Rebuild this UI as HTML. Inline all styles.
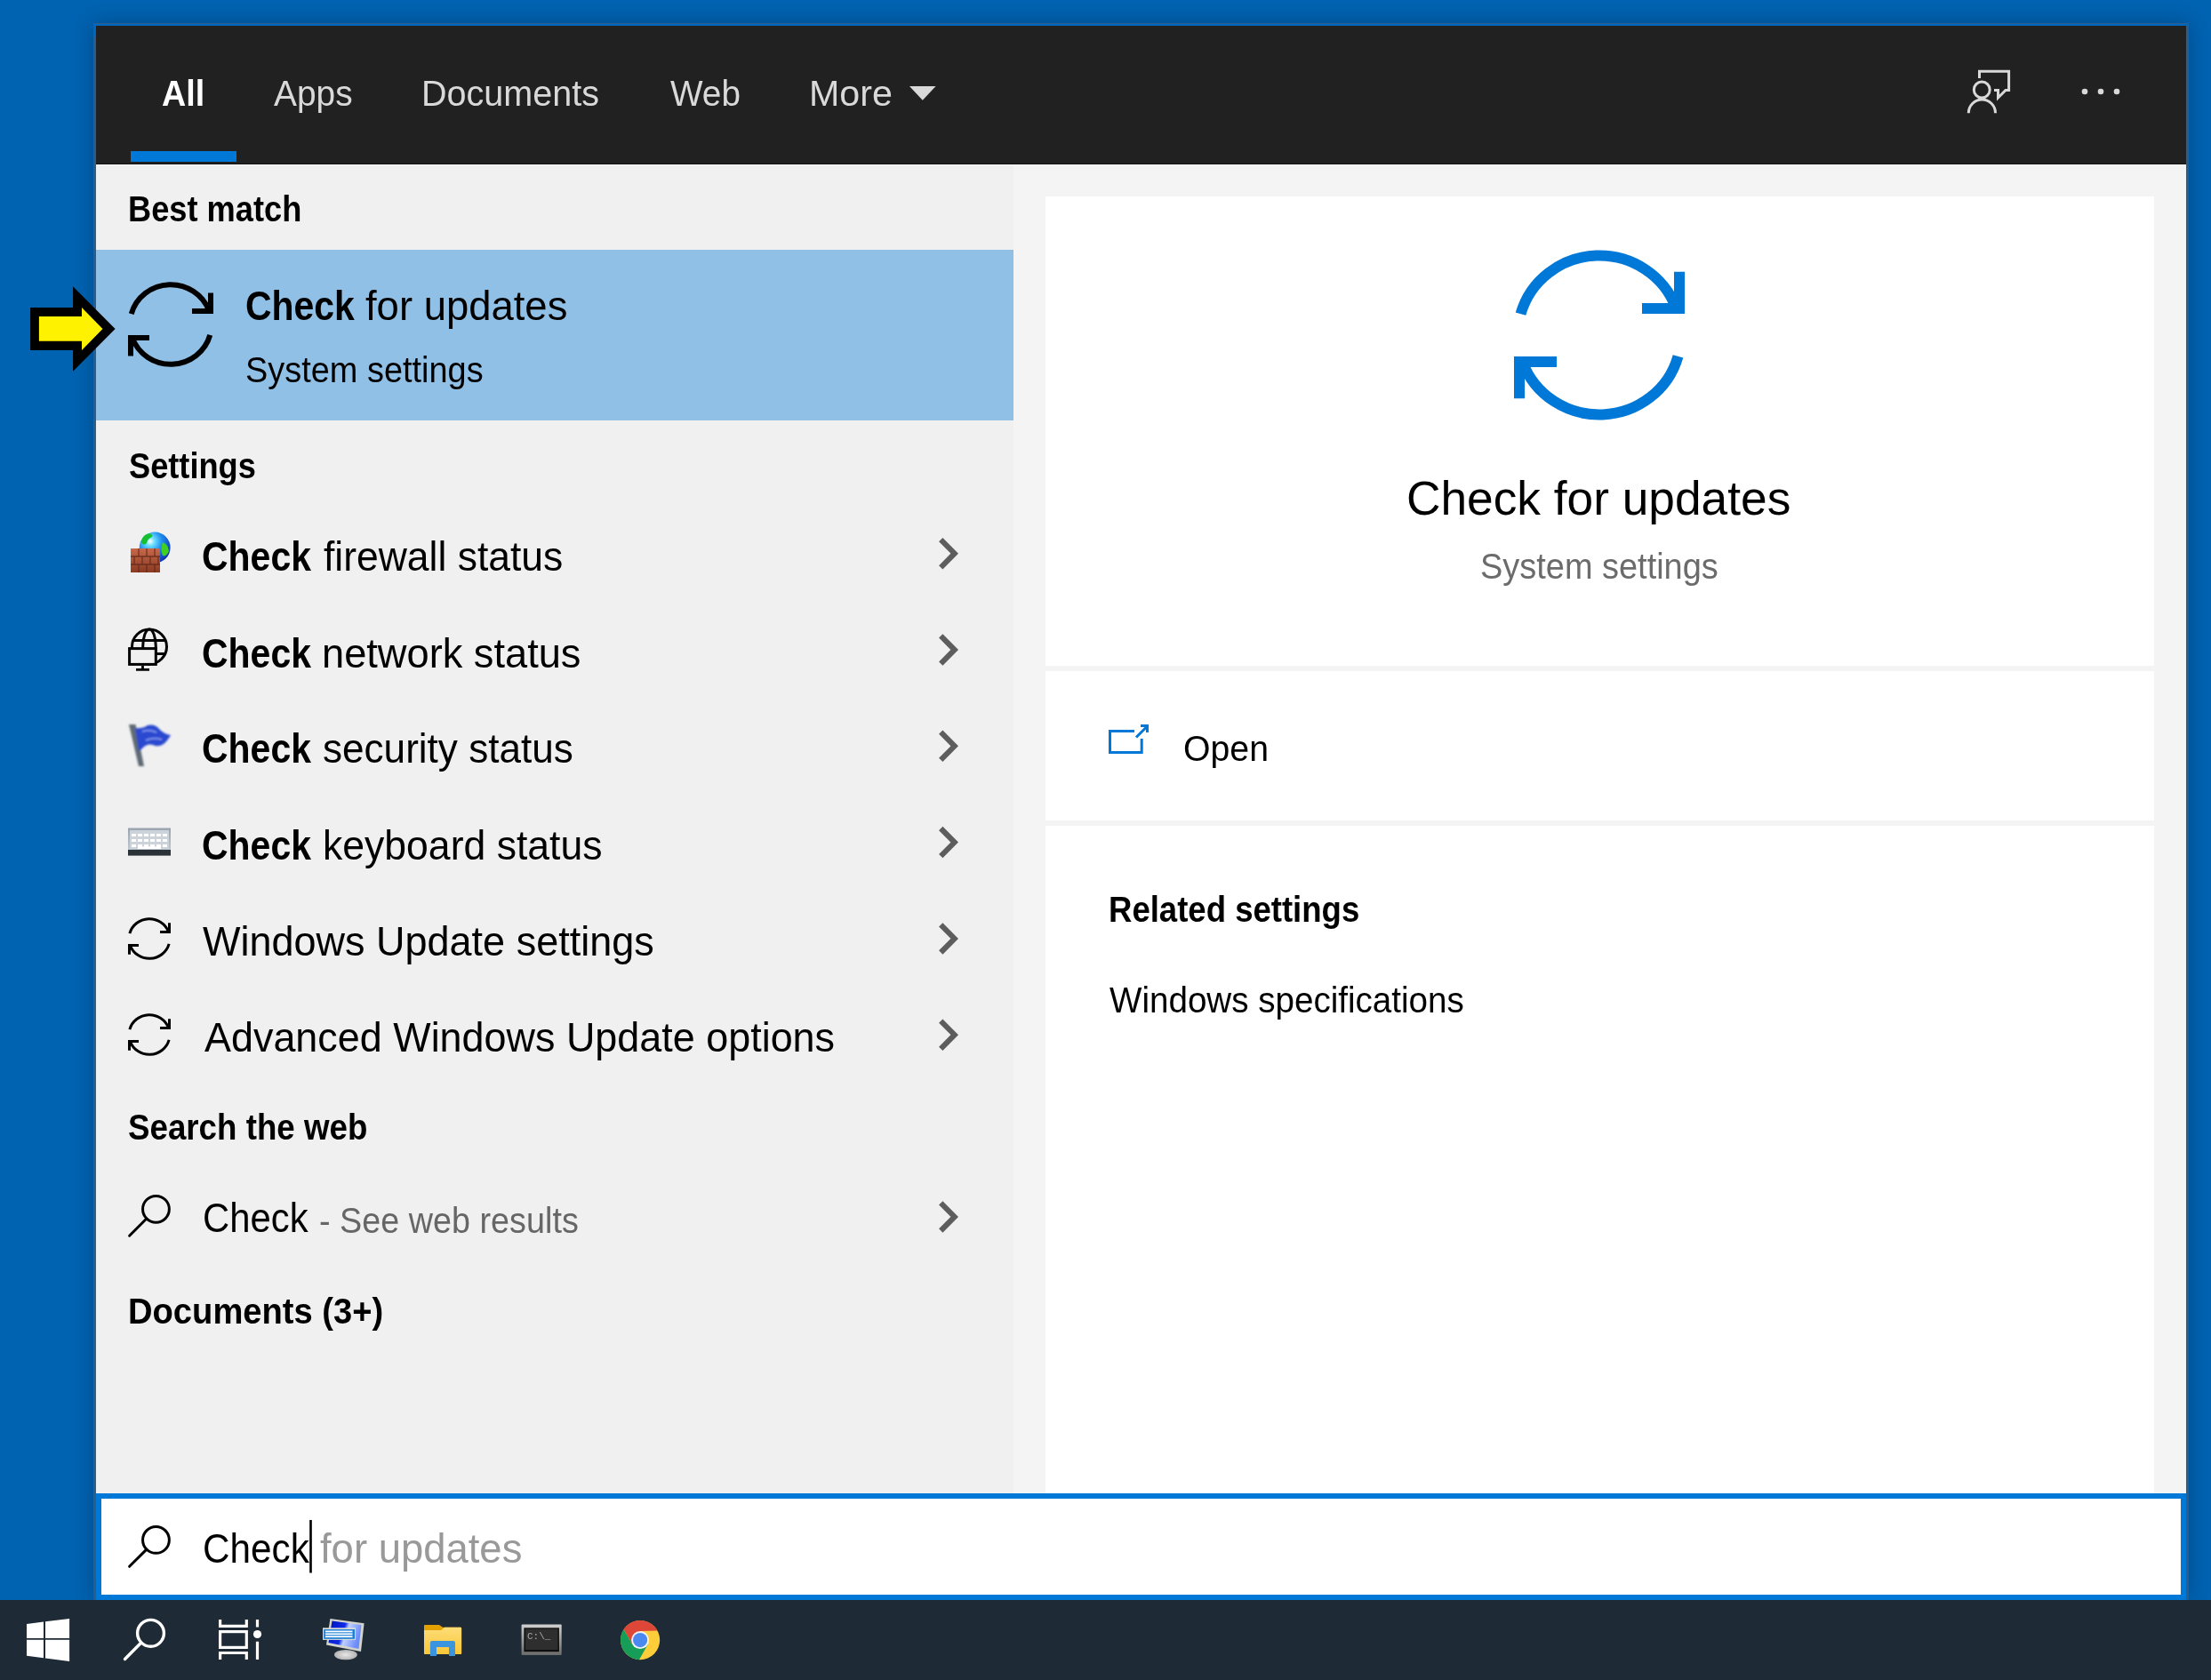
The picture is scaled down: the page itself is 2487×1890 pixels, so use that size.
<!DOCTYPE html>
<html><head><meta charset="utf-8">
<style>
html,body{margin:0;padding:0;}
body{width:2487px;height:1890px;position:relative;overflow:hidden;background:#0063b1;font-family:"Liberation Sans",sans-serif;}
.a{position:absolute;}
.t{position:absolute;white-space:pre;transform-origin:0 0;}
svg.a{overflow:visible}
</style></head><body>
<div class="a" style="left:105px;top:26px;width:2357px;height:1774px;background:#2b5d8b;box-shadow:0 0 22px rgba(0,15,50,0.3);"></div>
<div class="a" style="left:106px;top:27px;width:2355px;height:2px;background:#0067c0;"></div>
<div class="a" style="left:106px;top:27px;width:2px;height:14px;background:#0067c0;"></div>
<div class="a" style="left:108px;top:29px;width:2351px;height:156px;background:#212121;"></div>
<div class="a" style="left:108px;top:184px;width:2351px;height:1px;background:#121212;"></div>
<div class="a" style="left:108px;top:185px;width:2351px;height:1px;background:#ffffff;"></div>
<div class="a" style="left:108px;top:186px;width:1032px;height:1494px;background:#f0f0f0;"></div>
<div class="a" style="left:1140px;top:186px;width:1319px;height:1494px;background:#f4f4f4;"></div>
<div class="a" style="left:1176px;top:221px;width:1247px;height:528px;background:#fff;"></div>
<div class="a" style="left:1176px;top:755px;width:1247px;height:168px;background:#fff;"></div>
<div class="a" style="left:1176px;top:929px;width:1247px;height:751px;background:#fff;"></div>
<div class="a" style="left:108px;top:281px;width:1032px;height:192px;background:#91c0e7;"></div>
<div class="a" style="left:147px;top:170px;width:119px;height:12px;background:#0078d7;"></div>
<div class="a" style="left:108px;top:1680px;width:2339px;height:108px;border:6px solid #0078d7;background:#fff;"></div>
<div class="a" style="left:0;top:1800px;width:2487px;height:90px;background:#1e2b37;"></div>
<div class="t" style="left:182.06px;top:85.14px;font-size:40.70px;line-height:40.70px;font-weight:700;color:#fff;transform:scaleX(0.9268)">All</div><div class="t" style="left:308.00px;top:85.14px;font-size:40.70px;line-height:40.70px;font-weight:400;color:#d9d9d9;transform:scaleX(0.9565)">Apps</div><div class="t" style="left:474.24px;top:85.14px;font-size:40.70px;line-height:40.70px;font-weight:400;color:#d9d9d9;transform:scaleX(0.9719)">Documents</div><div class="t" style="left:753.61px;top:85.14px;font-size:40.70px;line-height:40.70px;font-weight:400;color:#d9d9d9;transform:scaleX(0.9519)">Web</div><div class="t" style="left:910.10px;top:85.14px;font-size:40.70px;line-height:40.70px;font-weight:400;color:#d9d9d9;transform:scaleX(1.0125)">More</div><div class="t" style="left:144.44px;top:215.24px;font-size:40.70px;line-height:40.70px;font-weight:700;color:#000;transform:scaleX(0.8904)">Best match</div><div class="t" style="left:275.56px;top:321.69px;font-size:45.90px;line-height:45.90px;font-weight:700;color:#000;transform:scaleX(0.8921)">Check</div><div class="t" style="left:411.32px;top:321.69px;font-size:45.90px;line-height:45.90px;font-weight:400;color:#000;transform:scaleX(0.9902)">for updates</div><div class="t" style="left:275.79px;top:395.74px;font-size:40.70px;line-height:40.70px;font-weight:400;color:#000;transform:scaleX(0.9318)">System settings</div><div class="t" style="left:144.51px;top:503.84px;font-size:40.70px;line-height:40.70px;font-weight:700;color:#000;transform:scaleX(0.8902)">Settings</div><div class="t" style="left:227.36px;top:604.04px;font-size:45.90px;line-height:45.90px;font-weight:700;color:#000;transform:scaleX(0.8928)">Check</div><div class="t" style="left:363.63px;top:604.04px;font-size:45.90px;line-height:45.90px;font-weight:400;color:#000;transform:scaleX(0.9686)">firewall status</div><div class="t" style="left:227.36px;top:712.54px;font-size:45.90px;line-height:45.90px;font-weight:700;color:#000;transform:scaleX(0.8928)">Check</div><div class="t" style="left:362.16px;top:712.54px;font-size:45.90px;line-height:45.90px;font-weight:400;color:#000;transform:scaleX(0.9851)">network status</div><div class="t" style="left:227.36px;top:819.94px;font-size:45.90px;line-height:45.90px;font-weight:700;color:#000;transform:scaleX(0.8928)">Check</div><div class="t" style="left:363.28px;top:819.94px;font-size:45.90px;line-height:45.90px;font-weight:400;color:#000;transform:scaleX(0.9607)">security status</div><div class="t" style="left:227.36px;top:928.94px;font-size:45.90px;line-height:45.90px;font-weight:700;color:#000;transform:scaleX(0.8928)">Check</div><div class="t" style="left:363.00px;top:928.94px;font-size:45.90px;line-height:45.90px;font-weight:400;color:#000;transform:scaleX(0.9707)">keyboard status</div><div class="t" style="left:228.07px;top:1036.94px;font-size:45.90px;line-height:45.90px;font-weight:400;color:#000;transform:scaleX(0.9805)">Windows Update settings</div><div class="t" style="left:229.50px;top:1145.34px;font-size:45.90px;line-height:45.90px;font-weight:400;color:#000;transform:scaleX(0.9787)">Advanced Windows Update options</div><div class="t" style="left:144.40px;top:1248.34px;font-size:40.70px;line-height:40.70px;font-weight:700;color:#000;transform:scaleX(0.9023)">Search the web</div><div class="t" style="left:227.91px;top:1348.44px;font-size:45.90px;line-height:45.90px;font-weight:400;color:#000;transform:scaleX(0.9114)">Check</div><div class="t" style="left:359.00px;top:1352.84px;font-size:40.70px;line-height:40.70px;font-weight:400;color:#666;transform:scaleX(0.9282)">- See web results</div><div class="t" style="left:143.52px;top:1455.34px;font-size:40.70px;line-height:40.70px;font-weight:700;color:#000;transform:scaleX(0.9377)">Documents (3+)</div><div class="t" style="left:1582.34px;top:533.65px;font-size:54.50px;line-height:54.50px;font-weight:400;color:#000;transform:scaleX(0.9773)">Check for updates</div><div class="t" style="left:1664.69px;top:617.34px;font-size:40.70px;line-height:40.70px;font-weight:400;color:#6b6b6b;transform:scaleX(0.9325)">System settings</div><div class="t" style="left:1330.63px;top:821.64px;font-size:40.70px;line-height:40.70px;font-weight:400;color:#000;transform:scaleX(0.9639)">Open</div><div class="t" style="left:1246.92px;top:1003.14px;font-size:40.70px;line-height:40.70px;font-weight:700;color:#000;transform:scaleX(0.8980)">Related settings</div><div class="t" style="left:1248.01px;top:1104.84px;font-size:40.70px;line-height:40.70px;font-weight:400;color:#000;transform:scaleX(0.9482)">Windows specifications</div><div class="t" style="left:227.69px;top:1720.24px;font-size:45.90px;line-height:45.90px;font-weight:400;color:#000;transform:scaleX(0.9207)">Check</div><div class="t" style="left:360.42px;top:1720.24px;font-size:45.90px;line-height:45.90px;font-weight:400;color:#999;transform:scaleX(0.9902)">for updates</div>
<svg class="a" style="left:0;top:0;width:2487px;height:1890px" viewBox="0 0 2487 1890">
 <!-- More triangle -->
 <polygon points="1023,97 1052.6,97 1037.8,112.7" fill="#d9d9d9"/>
 <!-- feedback icon -->
 <g fill="none" stroke="#d9d9d9" stroke-width="3">
  <path d="M2226.5 88 V80.2 H2259.6 V101.5 H2256 L2247.5 110 V101.5 H2243"/>
  <circle cx="2229.25" cy="101" r="8.95"/>
  <path d="M2214.3 127.2 A15.1 15.1 0 0 1 2244.5 127.2"/>
 </g>
 <g fill="#d9d9d9"><circle cx="2345" cy="103" r="3.3"/><circle cx="2363" cy="103" r="3.3"/><circle cx="2381" cy="103" r="3.3"/></g>
 <!-- chevrons -->
 <g fill="none" stroke="#5d5d5d" stroke-width="6.1" stroke-linejoin="miter"><polyline points="1058.25,607.1 1073.7,622.7 1058.25,638.3"/><polyline points="1058.25,715.4 1073.7,731.0 1058.25,746.6"/><polyline points="1058.25,823.7 1073.7,839.3 1058.25,854.9"/><polyline points="1058.25,932.0 1073.7,947.6 1058.25,963.2"/><polyline points="1058.25,1040.3 1073.7,1055.9 1058.25,1071.5"/><polyline points="1058.25,1148.6 1073.7,1164.2 1058.25,1179.8"/><polyline points="1058.25,1353.3 1073.7,1368.9 1058.25,1384.5"/></g>
 <!-- open icon -->
 <g fill="none" stroke="#0078d7" stroke-width="3" stroke-linejoin="miter">
  <path d="M1276 822.5 H1248.5 V846.4 H1284.2 V831"/>
  <path d="M1278 829.5 L1290 817.5"/>
  <path d="M1283 816.5 H1290.5 V824"/>
 </g>
 <!-- search icons -->
 <g fill="none" stroke="#000" stroke-width="3" stroke-linecap="round">
  <circle cx="175.45" cy="1360.3" r="14.9"/><path d="M164.8 1371 L145.6 1390.2"/>
  <circle cx="175.45" cy="1732.4" r="14.9"/><path d="M164.8 1743.1 L145.6 1762.3"/>
 </g>
 <!-- caret -->
 <rect x="348.2" y="1710" width="2.6" height="59.5" fill="#000"/>
 
 <defs>
  <radialGradient id="glb" cx="0.35" cy="0.3" r="0.75">
   <stop offset="0" stop-color="#ffffff"/><stop offset="0.18" stop-color="#6fe0ff"/><stop offset="0.5" stop-color="#1f8ff0"/><stop offset="1" stop-color="#1030b0"/>
  </radialGradient>
  <linearGradient id="brk" x1="0" y1="0" x2="0" y2="1">
   <stop offset="0" stop-color="#c8684a"/><stop offset="1" stop-color="#8a3a22"/>
  </linearGradient>
  <filter id="bl1" x="-20%" y="-20%" width="140%" height="140%"><feGaussianBlur stdDeviation="0.7"/></filter>
  <filter id="bl2" x="-20%" y="-20%" width="140%" height="140%"><feGaussianBlur stdDeviation="0.9"/></filter>
 </defs>
 <g filter="url(#bl1)">
  <circle cx="174.2" cy="616" r="17.4" fill="url(#glb)"/>
  <path d="M158.5 609 Q161 601 168 600 Q172 601 171 604 Q166 606 165 611 Q161 615 158.5 609Z" fill="#18c030"/>
  <path d="M183 610 Q189 612 190 620 Q187 627 183 625 Q180 618 183 610Z" fill="#40d020"/>
  <rect x="147" y="617" width="33" height="27" fill="url(#brk)"/>
  <g stroke="#5a2418" stroke-width="1.3" opacity="0.75">
   <path d="M147 626 H180 M147 635 H180"/>
   <path d="M156 617 V626 M165 617 V626 M174 617 V626 M151 626 V635 M160 626 V635 M169 626 V635 M178 626 V635 M156 635 V644 M165 635 V644 M174 635 V644"/>
  </g>
 </g>
 
 <g fill="none" stroke="#000" stroke-width="3">
  <circle cx="168" cy="727.5" r="19.5"/>
  <ellipse cx="168" cy="727.5" rx="7.3" ry="19.5"/>
  <path d="M149.5 720.5 H186.5 M176 735.5 H186"/>
 </g>
 <rect x="145.6" y="729.6" width="29.7" height="17.8" fill="#f0f0f0" stroke="#000" stroke-width="3"/>
 <path d="M160.5 749 V753 M153 753.4 H168" stroke="#000" stroke-width="2.8" fill="none"/>
 
 <g filter="url(#bl2)">
  <path d="M145 815 L152.5 815 L162 862 L156 862 Z" fill="#5f6a74"/>
  <path d="M152 819 Q160 820 166 816 Q174 814 180 821 Q185 826 192 827 Q188 834 184 837 Q178 841 172 838 Q165 836 160 842 Q157 845 156 844 Z" fill="#2a48d0"/>
  <path d="M160 823 Q168 820 176 824 M164 833 Q172 829 182 832" stroke="#8aa0f0" stroke-width="1.5" fill="none"/>
 </g>
 
 <defs><linearGradient id="kbg" x1="0" y1="0" x2="0" y2="1"><stop offset="0" stop-color="#9aa4ae"/><stop offset="1" stop-color="#c8d0d8"/></linearGradient></defs>
 <g filter="url(#bl1)">
  <rect x="144" y="931.5" width="48" height="31.5" fill="url(#kbg)"/>
  <rect x="146" y="934" width="44" height="21" fill="#cdd3da"/>
  <rect x="148.0" y="938" width="5" height="3" fill="#fff"/><rect x="155.0" y="938" width="5" height="3" fill="#fff"/><rect x="162.0" y="938" width="5" height="3" fill="#fff"/><rect x="169.0" y="938" width="5" height="3" fill="#fff"/><rect x="176.0" y="938" width="5" height="3" fill="#fff"/><rect x="183.0" y="938" width="5" height="3" fill="#fff"/><rect x="148.0" y="944" width="5" height="3" fill="#fff"/><rect x="155.0" y="944" width="5" height="3" fill="#fff"/><rect x="162.0" y="944" width="5" height="3" fill="#fff"/><rect x="169.0" y="944" width="5" height="3" fill="#fff"/><rect x="176.0" y="944" width="5" height="3" fill="#fff"/><rect x="183.0" y="944" width="5" height="3" fill="#fff"/><rect x="148.0" y="950" width="5" height="3" fill="#fff"/><rect x="155.0" y="950" width="5" height="3" fill="#fff"/><rect x="162.0" y="950" width="5" height="3" fill="#fff"/><rect x="169.0" y="950" width="5" height="3" fill="#fff"/><rect x="176.0" y="950" width="5" height="3" fill="#fff"/><rect x="183.0" y="950" width="5" height="3" fill="#fff"/>
  <rect x="155" y="952.5" width="26" height="2.5" fill="#fff"/>
  <rect x="144" y="956" width="48" height="6.5" fill="#2b3237"/>
 </g>
 <g fill="#fff"><polygon points="30,1827.1 49,1824.6 49,1842.9 30,1842.9"/><polygon points="51,1824.2 78.1,1821 78.1,1842.9 51,1842.9"/><polygon points="30,1844.8 49,1844.8 49,1865.2 30,1862.7"/><polygon points="51,1844.8 78.1,1844.8 78.1,1869 51,1865.6"/></g>
<g fill="none" stroke="#fff" stroke-width="3.4" stroke-linecap="round"><circle cx="169.5" cy="1837.3" r="14.9"/><path d="M158.5 1848.3 L140.5 1866.5"/></g>
<g fill="none" stroke="#fff" stroke-width="3.2"><path d="M247.6 1821.9 V1829.4 H277.3 V1821.9"/><rect x="247.6" y="1835.6" width="29.7" height="17.8"/><path d="M247.6 1866.9 V1859.5 H277.3 V1866.9"/><path d="M289.5 1821.9 V1830.4 M289.5 1846.7 V1866.9"/></g><circle cx="289.5" cy="1838.5" r="4.6" fill="#fff"/>
<defs><linearGradient id="scr" x1="0" y1="0" x2="1" y2="0.3"><stop offset="0" stop-color="#0018b8"/><stop offset="0.5" stop-color="#0a2ae8"/><stop offset="0.62" stop-color="#c0d0ff"/><stop offset="1" stop-color="#6d8cf8"/></linearGradient>
     <radialGradient id="stand" cx="0.5" cy="0.5" r="0.6"><stop offset="0" stop-color="#e8e8e8"/><stop offset="1" stop-color="#a8a8a8"/></radialGradient></defs>
     <g filter="url(#bl1)">
     <ellipse cx="388.9" cy="1861.6" rx="12.9" ry="5.7" fill="url(#stand)"/>
     <polygon points="371.4,1821.1 409.6,1826.3 406,1858 367,1850.6" fill="#d4d4cc"/>
     <polygon points="373.5,1823.5 406.5,1828 403.5,1855 369.5,1848" fill="url(#scr)"/>
     <rect x="363" y="1831.3" width="37" height="13.6" fill="#dcdcd4"/>
     <rect x="364.2" y="1833" width="34.8" height="10.8" fill="#1a7fd8"/>
     <g fill="#fff"><rect x="366" y="1834.5" width="30.5" height="1.8"/><rect x="366" y="1837.4" width="30.5" height="1.8"/><rect x="366" y="1840.3" width="30.5" height="1.8"/></g>
     </g>
<defs><linearGradient id="fld" x1="0" y1="0" x2="0" y2="1"><stop offset="0" stop-color="#fedd78"/><stop offset="1" stop-color="#f8c638"/></linearGradient></defs>
     <g filter="url(#bl1)">
     <path d="M477 1829 Q477 1827.9 478 1827.9 H494 L498 1830.7 H518 Q519.1 1830.7 519.1 1832 V1860 Q519.1 1861 518 1861 H478 Q477 1861 477 1860 Z" fill="#e3a100"/>
     <path d="M477 1833.9 H496 L500 1830.7 H518 Q519.1 1830.7 519.1 1832 V1860 Q519.1 1861 518 1861 H478 Q477 1861 477 1860 Z" fill="url(#fld)"/>
     <path d="M483.9 1862.9 V1848 Q483.9 1846 486 1846 H510 Q512 1846 512 1848 V1862.9 H505 V1852.9 H491 V1862.9 Z" fill="#3b94de"/>
     </g>
<defs><linearGradient id="trm" x1="0" y1="0" x2="0" y2="1"><stop offset="0" stop-color="#d0d0d0"/><stop offset="1" stop-color="#6a6a6a"/></linearGradient></defs>
     <g filter="url(#bl1)">
     <rect x="586.6" y="1827.6" width="45.1" height="34.4" rx="1" fill="url(#trm)"/>
     <rect x="589.4" y="1831.3" width="39.5" height="26.9" fill="#0c0c0c"/>
     <rect x="591" y="1832.5" width="36.5" height="23.5" fill="#2e2e2e"/>
     <text x="593" y="1844" font-family="Liberation Mono" font-size="11" fill="#bdbdbd" opacity="0.85">C:\_</text>
     </g>
<circle cx="720.1" cy="1845.1" r="22.07" fill="#fdcd3a"/>
     <path d="M701.59 1833.08 A22.07 22.07 0 0 1 739.40 1834.40 L720.10 1835.10 L711.44 1850.10 Z" fill="#de4638"/>
     <path d="M718.94 1867.14 A22.07 22.07 0 0 1 701.59 1833.08 L711.44 1850.10 L728.76 1850.10 Z" fill="#169e58"/>
     <circle cx="720.1" cy="1845.1" r="10" fill="#f4f4f4"/><circle cx="720.1" cy="1845.1" r="8.1" fill="#4a89f0"/>
 <!-- yellow arrow -->
 <polygon points="34.1,346.1 82.1,346.1 82.1,322.3 129.6,370 82.1,417.8 82.1,393.9 34.1,393.9" fill="#000"/>
 <polygon points="43.9,356.1 92,356.1 92,346.1 115.5,370 92,393.9 92,383.8 43.9,383.8" fill="#fff200"/>
</svg>
<svg class="a" style="left:1702.50px;top:280.50px;width:192px;height:192px" viewBox="-96 -96 192 192"><g fill="none" stroke="#0078d7" stroke-width="12"><path d="M-88.50 -23.77 A91.8 89.5 0 0 1 86.26 -30.61"/><path d="M-88.50 -23.77 A91.8 89.5 0 0 1 86.26 -30.61" transform="rotate(180)"/></g><g fill="#0078d7"><path d="M84.0 -71.2 H96.0 V-24.0 H48.0 V-36.0 H84.0 Z"/><path d="M84.0 -71.2 H96.0 V-24.0 H48.0 V-36.0 H84.0 Z" transform="rotate(180)"/></g></svg>
<svg class="a" style="left:144.05px;top:316.90px;width:96px;height:96px" viewBox="-96 -96 192 192"><g fill="none" stroke="#000" stroke-width="12"><path d="M-88.50 -23.77 A91.8 89.5 0 0 1 86.26 -30.61"/><path d="M-88.50 -23.77 A91.8 89.5 0 0 1 86.26 -30.61" transform="rotate(180)"/></g><g fill="#000"><path d="M84.0 -71.2 H96.0 V-24.0 H48.0 V-36.0 H84.0 Z"/><path d="M84.0 -71.2 H96.0 V-24.0 H48.0 V-36.0 H84.0 Z" transform="rotate(180)"/></g></svg>
<svg class="a" style="left:144.10px;top:1032.00px;width:48px;height:48px" viewBox="-96 -96 192 192"><g fill="none" stroke="#000" stroke-width="12"><path d="M-88.50 -23.77 A91.8 89.5 0 0 1 86.26 -30.61"/><path d="M-88.50 -23.77 A91.8 89.5 0 0 1 86.26 -30.61" transform="rotate(180)"/></g><g fill="#000"><path d="M84.0 -71.2 H96.0 V-24.0 H48.0 V-36.0 H84.0 Z"/><path d="M84.0 -71.2 H96.0 V-24.0 H48.0 V-36.0 H84.0 Z" transform="rotate(180)"/></g></svg>
<svg class="a" style="left:144.10px;top:1139.90px;width:48px;height:48px" viewBox="-96 -96 192 192"><g fill="none" stroke="#000" stroke-width="12"><path d="M-88.50 -23.77 A91.8 89.5 0 0 1 86.26 -30.61"/><path d="M-88.50 -23.77 A91.8 89.5 0 0 1 86.26 -30.61" transform="rotate(180)"/></g><g fill="#000"><path d="M84.0 -71.2 H96.0 V-24.0 H48.0 V-36.0 H84.0 Z"/><path d="M84.0 -71.2 H96.0 V-24.0 H48.0 V-36.0 H84.0 Z" transform="rotate(180)"/></g></svg>
</body></html>
